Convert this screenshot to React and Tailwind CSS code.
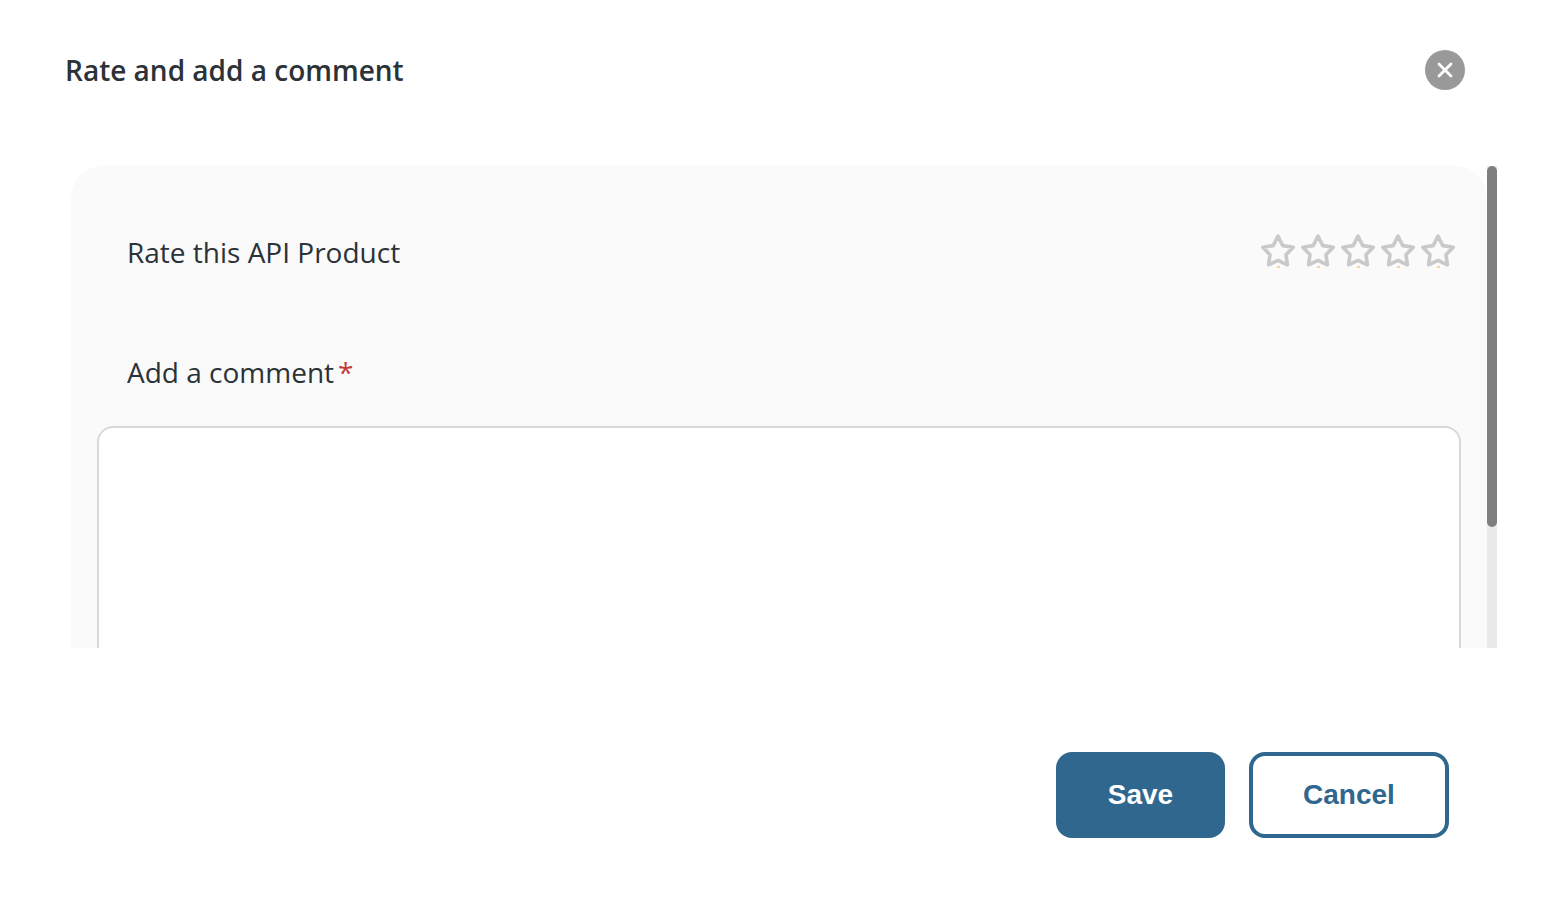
import { X } from "lucide-react";

function Star() {
    return (
        <span className="relative block w-[36px] h-[36px]">
            <svg width="36" height="36" viewBox="0 0 36 36" className="block blur-[0.5px]">
                <path
                    d="M18 3.2 L22.8 12.6 L33.2 14.2 L26 21.8 L27.4 31.8 L18 27.4 L8.6 31.8 L10 21.8 L2.8 14.2 L13.2 12.6 Z"
                    fill="none"
                    stroke="#c9c9c9"
                    strokeWidth="3.6"
                    strokeLinejoin="round"
                />
            </svg>
            <span className="absolute left-[17px] bottom-[1px] w-[3px] h-[2px] bg-[#fcd692]"></span>
        </span>
    );
}

export default function App() {
    return (
        <div className="w-[1556px] h-[910px] bg-white overflow-hidden font-['Open_Sans',sans-serif] text-[#2b3238]">
            {/* Header */}
            <div className="h-[166px] pl-[65px] pr-[91px] pt-[50px] flex justify-between items-start">
                <h1 className="text-[28px] leading-[40px] font-semibold">Rate and add a comment</h1>
                <button className="w-[40px] h-[40px] rounded-full bg-[#999999] flex items-center justify-center text-white">
                    <X size={24} strokeWidth={2.75} />
                </button>
            </div>

            {/* Scroll area */}
            <div className="h-[482px] ml-[71px] w-[1426px] flex overflow-hidden">
                <div className="w-[1416px] h-[900px] shrink-0 bg-[#fafafa] rounded-t-[32px] pl-[26px] pr-[26px]">
                    <div className="flex justify-between items-center pl-[30px] pr-[5px] pt-[64px]">
                        <span className="text-[28px] leading-[44px]">Rate this API Product</span>
                        <div className="flex gap-[4px] -mt-[3px]">
                            <Star />
                            <Star />
                            <Star />
                            <Star />
                            <Star />
                        </div>
                    </div>
                    <div className="pl-[30px] pt-[76px] text-[28px] leading-[44px]">
                        Add a comment<span className="text-[#c53a3a] ml-[4px]">*</span>
                    </div>
                    <div className="mt-[32px] w-[1364px] h-[400px] bg-white border-2 border-[#d8d8d8] rounded-[16px]"></div>
                </div>
                <div className="w-[10px] shrink-0 bg-[#e9e9e9]">
                    <div className="h-[361px] bg-[#7f7f7f] rounded-[5px]"></div>
                </div>
            </div>

            {/* Footer */}
            <div className="pt-[104px] pr-[107px] flex justify-end gap-[24px]">
                <button className="w-[169px] h-[86px] rounded-[16px] bg-[#2f678f] text-white text-[28px] font-bold font-['Liberation_Sans',sans-serif]">
                    Save
                </button>
                <button className="w-[200px] h-[86px] rounded-[16px] bg-white border-4 border-[#2f678f] text-[#2f678f] text-[28px] font-bold font-['Liberation_Sans',sans-serif]">
                    Cancel
                </button>
            </div>
        </div>
    );
}
